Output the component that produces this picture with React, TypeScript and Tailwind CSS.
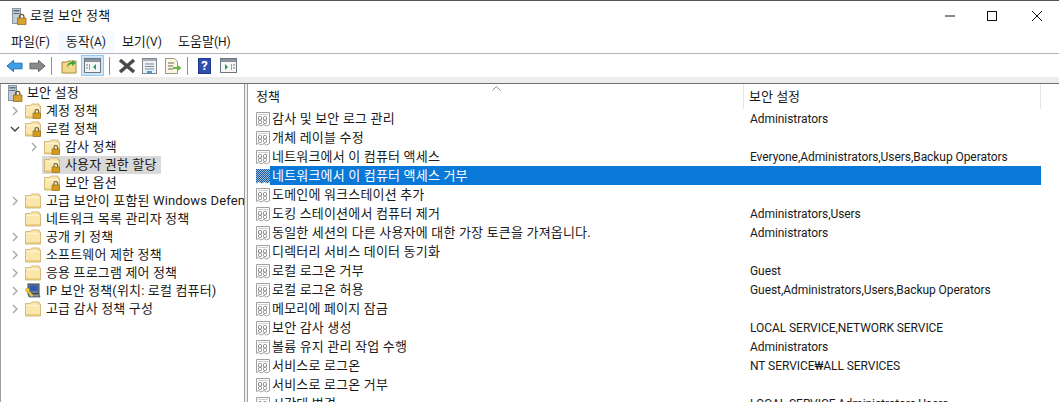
import type { ReactNode } from "react";

const font = { fontFamily: 'Roboto,"Noto Sans CJK KR",sans-serif' };

const Sep = () => <div className="mx-[5px] h-[18px] w-px bg-[#8f8f8f]" />;

const ShieldPc = () => (
  <svg width="16" height="17" viewBox="0 0 16 17" className="shrink-0">
    <rect x="1.500" y="0.500" width="8" height="15" fill="#c4ccd6" stroke="#8a95a3" />
    <rect x="2.500" y="2" width="6" height="1.500" fill="#5d6a7a" />
    <rect x="2.500" y="5" width="6" height="1" fill="#5d6a7a" />
    <rect x="6.500" y="10" width="8.500" height="6.500" fill="#d9a22f" stroke="#8a6414" strokeWidth="0.700" />
    <path d="M8.500 10V8.500a2.200 2.200 0 0 1 4.400 0V10" fill="none" stroke="#6e5a2a" strokeWidth="1.200" />
  </svg>
);

const Folder = ({ lock = false }: { lock?: boolean }) => (
  <svg width="16" height="16" viewBox="0 0 16 16" className="shrink-0">
    <path d="M0.500 2.500h5l1.200-1.500h7.300v2h1.500v12H0.500z" fill="#fbe7ac" stroke="#c9ab67" strokeWidth="0.800" />
    <path d="M2 4.500h12" stroke="#fff6d8" strokeWidth="1" />
    <path d="M1 14h14" stroke="#dcb960" strokeWidth="1" />
    {lock && (
      <>
        <rect x="8" y="10" width="7.500" height="5.500" fill="#d39a1e" stroke="#8c6512" strokeWidth="0.600" />
        <path d="M10 10V8.300a1.800 1.800 0 0 1 3.600 0V10" fill="none" stroke="#5f5a4c" strokeWidth="1.100" />
      </>
    )}
  </svg>
);

const IpIcon = () => (
  <svg width="16" height="16" viewBox="0 0 16 16" className="shrink-0">
    <rect x="3" y="1" width="11" height="9.500" fill="#6f7a8a" stroke="#3d4654" />
    <rect x="4.500" y="2.500" width="8" height="5.500" fill="#2f58b5" />
    <path d="M3 11h11l1 3H4z" fill="#88909c" stroke="#3d4654" strokeWidth="0.700" />
    <path d="M1 6.500 7.500 13" stroke="#f1d32b" strokeWidth="2" />
    <circle cx="2.500" cy="7" r="2" fill="#f1d32b" stroke="#a58d12" strokeWidth="0.500" />
  </svg>
);

const PolicyIcon = ({ selected = false }: { selected?: boolean }) => (
  <svg width="16" height="16" viewBox="0 0 16 16" className="shrink-0">
    {selected ? (
      <>
        <defs>
          <pattern id="dither" width="2" height="2" patternUnits="userSpaceOnUse">
            <rect width="2" height="2" fill="#9db8d2" />
            <rect width="1" height="1" fill="#1d5f9e" />
            <rect x="1" y="1" width="1" height="1" fill="#1d5f9e" />
          </pattern>
        </defs>
        <path d="M1 1h14v13l-3 1.500-2.500-1.500-3 1.500-2.500-1.500-3 1.500z" fill="url(#dither)" />
      </>
    ) : (
      <>
        <path d="M1.500 1.500h13v12l-3 1.500-2.500-1.500-3 1.500-2.500-1.500-2 1z" fill="#fff" stroke="#a0a0a0" />
        <path d="M3 3.500h10" stroke="#cfcfcf" />
        <rect x="3.500" y="5.500" width="3" height="3.500" rx="1" fill="none" stroke="#858585" />
        <rect x="8.500" y="5.500" width="3" height="3.500" rx="1" fill="none" stroke="#858585" />
        <rect x="3.500" y="9.500" width="3" height="3" rx="1" fill="none" stroke="#858585" />
        <rect x="8.500" y="9.500" width="3" height="3" rx="1" fill="none" stroke="#858585" />
      </>
    )}
  </svg>
);

const Chevron = ({ open = false }: { open?: boolean }) => (
  <svg width="10" height="10" viewBox="0 0 10 10" className="shrink-0">
    {open ? (
      <path d="M1 3l4 4 4-4" fill="none" stroke="#404040" strokeWidth="1.400" />
    ) : (
      <path d="M3 1l4 4-4 4" fill="none" stroke="#a6a6a6" strokeWidth="1.400" />
    )}
  </svg>
);

const Latin = ({ children }: { children: ReactNode }) => <span className="text-[12px]">{children}</span>;

const treeItems: { label: ReactNode; indent: number; chev?: "open" | "closed"; icon: ReactNode; active?: boolean }[] = [
  { label: "계정 정책", indent: 9, chev: "closed", icon: <Folder lock /> },
  { label: "로컬 정책", indent: 9, chev: "open", icon: <Folder lock /> },
  { label: "감사 정책", indent: 28, chev: "closed", icon: <Folder lock /> },
  { label: "사용자 권한 할당", indent: 28, icon: <Folder lock />, active: true },
  { label: "보안 옵션", indent: 28, icon: <Folder lock /> },
  { label: "고급 보안이 포함된 Windows Defender 방화벽", indent: 9, chev: "closed", icon: <Folder /> },
  { label: "네트워크 목록 관리자 정책", indent: 9, icon: <Folder /> },
  { label: "공개 키 정책", indent: 9, chev: "closed", icon: <Folder /> },
  { label: "소프트웨어 제한 정책", indent: 9, chev: "closed", icon: <Folder /> },
  { label: "응용 프로그램 제어 정책", indent: 9, chev: "closed", icon: <Folder /> },
  { label: <><Latin>IP</Latin> 보안 정책(위치: 로컬 컴퓨터)</>, indent: 9, chev: "closed", icon: <IpIcon /> },
  { label: "고급 감사 정책 구성", indent: 9, chev: "closed", icon: <Folder /> },
];

const policies: [string, string][] = [
  ["감사 및 보안 로그 관리", "Administrators"],
  ["개체 레이블 수정", ""],
  ["네트워크에서 이 컴퓨터 액세스", "Everyone,Administrators,Users,Backup Operators"],
  ["네트워크에서 이 컴퓨터 액세스 거부", ""],
  ["도메인에 워크스테이션 추가", ""],
  ["도킹 스테이션에서 컴퓨터 제거", "Administrators,Users"],
  ["동일한 세션의 다른 사용자에 대한 가장 토큰을 가져옵니다.", "Administrators"],
  ["디렉터리 서비스 데이터 동기화", ""],
  ["로컬 로그온 거부", "Guest"],
  ["로컬 로그온 허용", "Guest,Administrators,Users,Backup Operators"],
  ["메모리에 페이지 잠금", ""],
  ["보안 감사 생성", "LOCAL SERVICE,NETWORK SERVICE"],
  ["볼륨 유지 관리 작업 수행", "Administrators"],
  ["서비스로 로그온", "NT SERVICE₩ALL SERVICES"],
  ["서비스로 로그온 거부", ""],
  ["시간대 변경", "LOCAL SERVICE,Administrators,Users"],
];

const Toolbar = () => (
  <div className="flex h-[23px] items-center pl-[6px]">
    <svg width="17" height="16" viewBox="0 0 18 16">
      <path d="M1 8l7-6v3h9v6H8v3z" fill="#3f9fe6" stroke="#1d6fb5" />
    </svg>
    <svg width="17" height="16" viewBox="0 0 18 16" className="ml-[6px]">
      <path d="M17 8l-7-6v3H1v6h9v3z" fill="#8a8a8a" stroke="#5e5e5e" />
    </svg>
    <Sep />
    <svg width="16" height="16" viewBox="0 0 16 16" className="ml-[4px]">
      <path d="M1 4h5l1-1h8v12H1z" fill="#f3d78a" stroke="#a98a3c" />
      <path d="M6 10c0-4 2-6 5-6V2l4 3-4 3V6c-2 0-4 1-5 4z" fill="#3fa33f" />
    </svg>
    <div className="ml-[4px] flex h-[21px] w-[23px] items-center justify-center border border-[#90c8f6] bg-[#cde6fa]">
      <svg width="17" height="15" viewBox="0 0 17 15">
        <rect x="0.500" y="0.500" width="16" height="14" fill="#f4f6f8" stroke="#6e7780" />
        <rect x="1" y="1" width="15" height="3" fill="#8a939c" />
        <path d="M5.500 6v6" stroke="#9aa2aa" />
        <path d="M12 6v6l-3-3z" fill="#2f9e4f" />
        <path d="M2 7h2M2 10h2" stroke="#6e7780" />
      </svg>
    </div>
    <Sep />
    <svg width="18" height="16" viewBox="0 0 18 16" className="ml-[3px]">
      <path d="M2 2l14 12M16 2L2 14" stroke="#4a4a4a" strokeWidth="3.600" />
    </svg>
    <svg width="15" height="16" viewBox="0 0 15 16" className="ml-[6px]">
      <rect x="0.500" y="0.500" width="14" height="15" fill="#eef1f4" stroke="#7f868e" />
      <rect x="1" y="1" width="13" height="2" fill="#a9b0b8" />
      <path d="M3 6h9M3 8.500h9M3 11h9" stroke="#7c8b9c" />
      <path d="M5 14h5" stroke="#2f9fe6" strokeWidth="2" />
    </svg>
    <svg width="17" height="16" viewBox="0 0 17 16" className="ml-[8px]">
      <path d="M0.500 0.500h9l3 3v12h-12z" fill="#fbf6e2" stroke="#9a9a8a" />
      <path d="M3 5h6M3 8h5M3 11h5" stroke="#6a6a6a" />
      <path d="M8 9h4V6.500l4.500 3.500-4.500 3.500V11H8z" fill="#62b83f" />
    </svg>
    <Sep />
    <div className="ml-[5px] flex h-[16px] w-[13px] items-center justify-center border border-[#1f3a8a] bg-[#2f4fb0] text-[13px] leading-none font-bold text-white">
      ?
    </div>
    <svg width="17" height="15" viewBox="0 0 17 15" className="ml-[9px]">
      <rect x="0.500" y="0.500" width="16" height="14" fill="#f4f6f8" stroke="#6e7780" />
      <rect x="1" y="1" width="15" height="3" fill="#8a939c" />
      <path d="M11.500 6v6" stroke="#9aa2aa" />
      <path d="M5 6v6l3-3z" fill="#2f9e4f" />
      <path d="M13 7h2M13 10h2" stroke="#6e7780" />
    </svg>
  </div>
);

const MenuItem = ({ name, mn, hover = false }: { name: string; mn: string; hover?: boolean }) => (
  <span className={`flex h-[22px] items-center px-[8px] ${hover ? "bg-[#f5faff]" : ""}`}>
    {name}
    <span className="text-[12px]">({mn})</span>
  </span>
);

export default function App() {
  return (
    <div style={font} className="flex h-[402px] w-[1059px] flex-col overflow-hidden border-t border-[#555] bg-white text-[13px] leading-[18px] text-[#1a1a1a]">
      {/* title */}
      <div className="flex h-[30px] items-center pl-[11px]">
        <ShieldPc />
        <span className="ml-[3px] tracking-[0.3px]">로컬 보안 정책</span>
        <div className="ml-auto flex items-center">
          <svg width="12" height="12" viewBox="0 0 12 12"><path d="M1 6h10" stroke="#111" /></svg>
          <svg width="12" height="12" viewBox="0 0 12 12" className="ml-[30px]"><rect x="1.500" y="1.500" width="9" height="9" fill="none" stroke="#111" /></svg>
          <svg width="12" height="12" viewBox="0 0 12 12" className="mr-[16px] ml-[33px]"><path d="M1 1l10 10M11 1L1 11" stroke="#111" /></svg>
        </div>
      </div>
      {/* menu */}
      <div className="flex h-[23px] items-center border-b border-[#b4b4c0] pl-[3px]">
        <MenuItem name="파일" mn="F" />
        <MenuItem name="동작" mn="A" hover />
        <MenuItem name="보기" mn="V" />
        <MenuItem name="도움말" mn="H" />
      </div>
      <Toolbar />
      <div className="h-[7px] border-b border-[#6e6e6e] bg-[#ececec]" />
      {/* panes */}
      <div className="flex min-h-0 flex-1 bg-[#f0f0f0]">
        <div className="w-[245px] shrink-0 overflow-hidden border-r border-l border-r-[#a0a0a0] border-l-[#a0a0a0] bg-white">
          <div className="flex h-[18px] items-center pl-[6px]">
            <ShieldPc />
            <span className="ml-[4px] tracking-[0.15px]">보안 설정</span>
          </div>
          {treeItems.map((t, i) => (
            <div key={i} style={{ paddingLeft: t.indent }} className="flex h-[18px] items-center whitespace-nowrap">
              <div className="flex w-[15px] shrink-0 items-center">{t.chev && <Chevron open={t.chev === "open"} />}</div>
              <div className={`flex h-[18px] items-center ${t.active ? "-ml-[2px] bg-[#d9d9d9] pr-[4px] pl-[2px]" : ""}`}>
                <span className="flex shrink-0 items-center">{t.icon}</span>
                <span className="ml-[5px] tracking-[0.15px]">{t.label}</span>
              </div>
            </div>
          ))}
        </div>
        <div className="ml-[2px] min-w-0 flex-1 border-l border-[#a0a0a0] bg-white">
          <div className="flex h-[25px] w-[793px] items-center">
            <div className="relative flex h-full w-[496px] items-center border-r border-[#e5e5e5] pl-[8px]">
              <span>정책</span>
              <svg width="9" height="5" viewBox="0 0 9 5" className="absolute top-[2px] left-[244px]">
                <path d="M0.500 4.500l4-4 4 4" fill="none" stroke="#8a8a8a" />
              </svg>
            </div>
            <span className="pl-[5px]">보안 설정</span>
            <div className="ml-auto h-full w-px bg-[#e5e5e5]" />
          </div>
          {policies.map(([name, value], i) => (
            <div key={name} className="flex h-[19px] w-[793px] items-center whitespace-nowrap">
              <div className="ml-[7px] flex h-[19px] w-[15px] items-center"><PolicyIcon selected={i === 3} /></div>
              <div className={`flex h-[19px] flex-1 items-center ${i === 3 ? "bg-[#0a78d7] text-white" : ""}`}>
                <span className="w-[479px] pl-[2px] tracking-[0.18px]">{name}</span>
                <span className="pl-[1px] text-[12px] tracking-[-0.06px]">{value}</span>
              </div>
            </div>
          ))}
        </div>
      </div>
    </div>
  );
}
